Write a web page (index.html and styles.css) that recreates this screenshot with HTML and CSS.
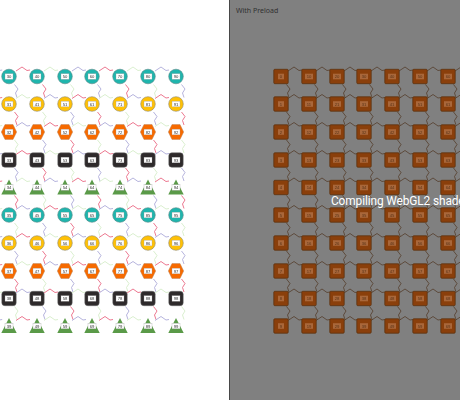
FILE: index.html
```html
<!DOCTYPE html>
<html lang="en">
<head>
<meta charset="utf-8">
<title>With Preload</title>
<link rel="stylesheet" href="styles.css">
</head>
<body>
<main class="split">
  <section class="panel panel-plain">
    <svg class="graph" id="plain" viewBox="0 0 229 400"></svg>
  </section>
  <section class="panel panel-preload">
    <header class="panel-title">With Preload</header>
    <svg class="graph graph-preload" id="preload" viewBox="230 20 230 380"></svg>
    <div class="loading">Compiling WebGL2 shaders...</div>
  </section>
</main>
<script src="app.js"></script>
</body>
</html>
```

FILE: styles.css
```css
* { box-sizing: border-box; }
html, body { margin: 0; height: 100%; overflow: hidden; }
body { font-family: "Noto Sans", "Liberation Sans", sans-serif; background: #fff; }

.split { display: grid; grid-template-columns: 229px 1fr; height: 400px; }
.panel { overflow: hidden; display: flex; flex-direction: column; position: relative; }
.panel-plain { background: #fff; }
.panel-preload { background: #808080; border-left: 1px solid #484848; }
.panel-title { height: 20px; padding: 6px 0 0 6px; font-size: 7px; line-height: 9px; color: #303030; }
.graph { display: block; width: 100%; flex: 1; min-height: 0; filter: blur(0.2px); }

.loading {
  position: absolute; left: 101px; top: 193px;
  font-family: Roboto, "Liberation Sans", sans-serif;
  font-size: 11.9px; letter-spacing: -0.12px; line-height: 16px; color: #fff; white-space: nowrap;
}

.edge { fill: none; stroke-width: .9; stroke-linejoin: round; }
.e0 { stroke: #ea6a85; }
.e1 { stroke: #d6edca; }
.e2 { stroke: #aeacd9; }
.graph-preload .edge { stroke: #4f3320; stroke-width: .7; }

.teal { fill: #1fb5ad; stroke: #5f8a88; stroke-width: .6; }
.yellow { fill: #ffc107; stroke: #8f8a70; stroke-width: .6; }
.orange { fill: #f66a00; stroke: #c08a60; stroke-width: .5; }
.black { fill: #2e2a2b; stroke: #666; stroke-width: .5; }
.green { fill: #5a9a48; stroke: none; }
.brown { fill: #8a3f0b; stroke: #5c3312; stroke-width: .8; }

.tag { fill: #fff; stroke: #999; stroke-width: .3; }
.tag-text { font-size: 4.2px; fill: #333; text-anchor: middle; font-family: "Liberation Sans", sans-serif; }
.graph-preload .tag { fill: #a9673a; stroke: none; }
.graph-preload .tag-text { fill: #5a3418; }
```

FILE: app.js
```js
const NS = 'http://www.w3.org/2000/svg';
const colX = [9, 37, 65, 92, 120, 148, 176];
const rowY = [76.5, 104, 132, 160, 187.5, 215, 243, 271, 298.5, 326];

function el(parent, name, attrs, text) {
  const n = document.createElementNS(NS, name);
  for (const k in attrs) n.setAttribute(k, attrs[k]);
  if (text !== undefined) n.textContent = text;
  parent.appendChild(n);
  return n;
}

function poly(g, kind, x, y, pts) {
  el(g, 'polygon', { class: kind, points: pts.map(q => (x + q[0]) + ',' + (y + q[1])).join(' ') });
}

function shape(g, kind, x, y) {
  if (kind === 'teal' || kind === 'yellow') {
    el(g, 'circle', { class: kind, cx: x, cy: y, r: 7.3 });
  } else if (kind === 'orange') {
    poly(g, kind, x, y, [[-4,-7.5],[4,-7.5],[7.7,0],[4,7.5],[-4,7.5],[-7.7,0]]);
  } else if (kind === 'green') {
    poly(g, kind, x, y, [[0,-8],[7.7,7],[-7.7,7]]);
  } else {
    el(g, 'rect', { class: kind, x: x - 7.2, y: y - 7.2, width: 14.4, height: 14.4, rx: kind === 'black' ? 3 : 1 });
  }
}

// leading: edges arriving from the column left of the view; trailing: edges leaving the last column
function draw(svg, dx, firstCol, kindFor, leading, trailing) {
  const xs = colX.map(v => v + dx);
  const cols = (leading ? [xs[0] - 27.8] : []).concat(xs);
  cols.forEach((x, ci) => {
    const c = leading ? ci - 1 : ci;
    rowY.forEach((y, r) => {
      if (c < colX.length - 1 || trailing) {
        const hc = ((c + r) % 3 + 3) % 3;
        el(svg, 'path', { class: 'edge e' + hc,
          d: `M${x+7} ${y-5.5}L${x+13} ${y-9.5}L${x+18} ${y-6}L${x+21} ${y-6.5}` });
      }
      if (r < rowY.length - 1 && c >= 0) {
        const vc = (c + r + 2) % 3;
        el(svg, 'path', { class: 'edge e' + vc,
          d: `M${x+5.5} ${y+8}L${x+9} ${y+12.5}L${x+6.5} ${y+16.5}L${x+8} ${y+21}` });
      }
    });
  });
  xs.forEach((x, c) => {
    rowY.forEach((y, r) => {
      shape(svg, kindFor(r), x, y);
      const label = String((firstCol + c) * 10 + r);
      const w = label.length > 1 ? 8 : 6;
      el(svg, 'rect', { class: 'tag', x: x - w / 2, y: y - 2.8, width: w, height: 5.6 });
      el(svg, 'text', { class: 'tag-text', x: x, y: y + 1.5 }, label);
    });
  });
}

const kinds = ['teal', 'yellow', 'orange', 'black', 'green'];
draw(document.getElementById('plain'), 0, 3, r => kinds[r % 5], true, false);
draw(document.getElementById('preload'), 272, 0, () => 'brown', false, true);
```
